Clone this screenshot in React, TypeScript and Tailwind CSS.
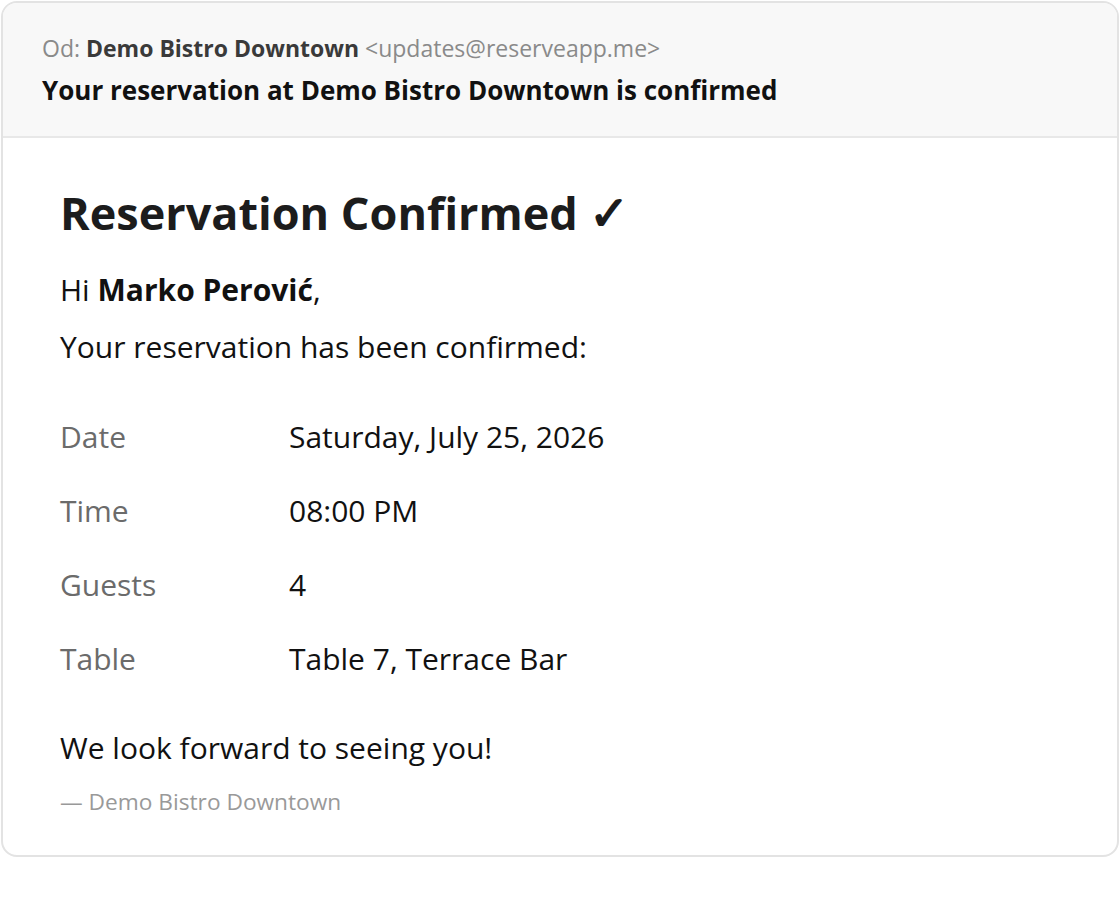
const DETAILS: { label: string; value: string }[] = [
  { label: "Date", value: "Saturday, July 25, 2026" },
  { label: "Time", value: "08:00 PM" },
  { label: "Guests", value: "4" },
  { label: "Table", value: "Table 7, Terrace Bar" },
];

export default function App() {
  return (
    <div className="min-h-screen bg-white p-px font-['Open_Sans',sans-serif]">
      <div className="overflow-hidden rounded-2xl border-2 border-[#e3e3e3] bg-white">
        {/* Mail header */}
        <div className="border-b-2 border-[#e8e8e8] bg-[#f8f8f8] pl-[39px] pr-10 pb-[30px] pt-[31px]">
          <div className="text-[23px] leading-[28px] text-[#8a8a8a]">
            Od: <span className="font-bold text-[#3a3a3a]">Demo Bistro Downtown</span>{" "}
            &lt;updates@reserveapp.me&gt;
          </div>
          <div className="mt-[12px] text-[26px] font-bold leading-[32px] text-[#111]">
            Your reservation at Demo Bistro Downtown is confirmed
          </div>
        </div>

        {/* Mail body */}
        <div className="pl-[57px] pr-[59px] pb-[38px] pt-[45px] text-[#111]">
          <h1 className="h-[60px] text-[45px] font-bold leading-[60px] text-[#1c1c1c]">
            Reservation Confirmed <span className="text-[48px] leading-none">✓</span>
          </h1>
          <p className="mt-[27px] text-[30px] leading-[40px]">
            Hi <span className="font-bold">Marko Perović</span>,
          </p>
          <p className="mt-[17px] text-[30px] leading-[40px]">
            Your reservation has been confirmed:
          </p>

          <div className="mt-[50px] flex flex-col gap-[34px]">
            {DETAILS.map((d) => (
              <div key={d.label} className="flex text-[30px] leading-[40px]">
                <div className="w-[229px] text-[#6b6b6b]">{d.label}</div>
                <div>{d.value}</div>
              </div>
            ))}
          </div>

          <p className="mt-[49px] text-[30px] leading-[40px]">We look forward to seeing you!</p>
          <p className="mt-[19px] text-[22.7px] leading-[30px] text-[#999]">— Demo Bistro Downtown</p>
        </div>
      </div>
    </div>
  );
}
